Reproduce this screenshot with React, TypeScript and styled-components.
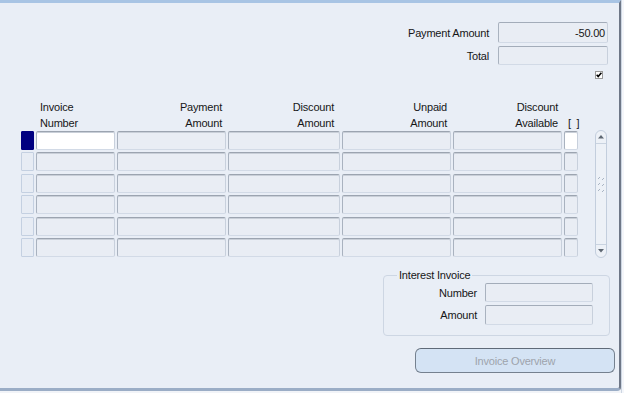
import React from "react";
import styled, { createGlobalStyle, css } from "styled-components";

const GlobalStyle = createGlobalStyle`
  html, body {
    margin: 0;
    padding: 0;
  }
  body {
    background: #f2f4f8;
    font-family: "Liberation Sans", Arial, sans-serif;
    font-size: 11px;
    letter-spacing: -0.2px;
    color: #161616;
    overflow: hidden;
  }
`;

const Page = styled.div`
  display: flex;
  width: 624px;
  height: 393px;
`;

const Window = styled.div`
  width: 621px;
  height: 391px;
  box-sizing: border-box;
  background: #e9eef6;
  border-top: 3px solid #a8c4e4;
  border-right: 2px solid #6e7787;
  border-bottom: 3px solid #9badc6;
  border-bottom-right-radius: 4px;
  display: flex;
  flex-direction: column;
`;

const OuterStrip = styled.div`
  flex: 1;
  background: #f4f6fa;
  border-left: 1px solid #cdd6e2;
`;

const Summary = styled.div`
  display: grid;
  grid-template-columns: auto 110px;
  column-gap: 9px;
  row-gap: 3px;
  align-items: center;
  justify-content: end;
  padding: 19px 11px 0 0;
`;

const Label = styled.div`
  text-align: right;
  white-space: nowrap;
`;

const fieldBevel = css`
  box-sizing: border-box;
  background: #e9edf4;
  border-top: 1px solid #a3acb9;
  border-left: 1px solid #a9b2bf;
  border-right: 1px solid #c8d0dc;
  border-bottom: 1px solid #d2dae6;
  border-radius: 2px;
`;

const Field = styled.div<{ $h?: number }>`
  ${fieldBevel};
  height: ${(p) => p.$h ?? 20}px;
  padding: 0 2px;
  display: flex;
  align-items: center;
  justify-content: flex-end;
`;

const CheckRow = styled.div`
  display: flex;
  justify-content: flex-end;
  padding-right: 16px;
  margin-top: 6px;
  height: 8px;
`;

const columns = css`
  display: grid;
  grid-template-columns: 13px 79px 109px 112px 109px 109px 14px;
  column-gap: 2px;
  padding-left: 21px;
`;

const HeaderGrid = styled.div`
  ${columns};
  margin-top: 20px;
  line-height: 16px;
`;

const HeadCell = styled.div<{ $align?: "left" | "right" | "center" }>`
  text-align: ${(p) => p.$align ?? "right"};
  padding: 0 4px;
  white-space: pre;
`;

const TableBody = styled.div`
  display: flex;
  align-items: flex-start;
`;

const RowsGrid = styled.div`
  ${columns};
  grid-auto-rows: 19px;
  row-gap: 2.4px;
`;

const Indicator = styled.div<{ $active?: boolean }>`
  box-sizing: border-box;
  border-radius: 1px;
  background: ${(p) => (p.$active ? "#000080" : "#e7ecf4")};
  border: 1px solid ${(p) => (p.$active ? "#000080" : "#c4d0e1")};
`;

const Cell = styled.div<{ $white?: boolean }>`
  ${fieldBevel};
  background: ${(p) => (p.$white ? "#ffffff" : "#e9edf4")};
  border-top-color: #9ca4b0;
  box-shadow: inset 0 1px 0 #c9cfd8;
`;

const ScrollTrack = styled.div`
  margin-left: 17px;
  margin-top: -1px;
  width: 12px;
  height: 128px;
  box-sizing: border-box;
  border: 1px solid #c3cedd;
  border-radius: 6px;
  background: #edf1f7;
  display: flex;
  flex-direction: column;
`;

const ScrollArrow = styled.div<{ $bottom?: boolean }>`
  height: 12px;
  display: flex;
  align-items: center;
  justify-content: center;
  ${(p) =>
    p.$bottom
      ? "border-top: 1px solid #c9d3e0;"
      : "border-bottom: 1px solid #c9d3e0;"}
`;

const ScrollMiddle = styled.div`
  flex: 1;
  display: flex;
  align-items: center;
  justify-content: center;
  padding-bottom: 16px;
`;

const BottomArea = styled.div`
  display: flex;
  flex-direction: column;
  align-items: flex-end;
`;

const Group = styled.fieldset`
  margin: 10px 9px 0 0;
  width: 227px;
  box-sizing: border-box;
  border: 1px solid #cdd6e3;
  border-radius: 4px;
  padding: 1px 16px 10px 0;
  display: grid;
  grid-template-columns: auto 108px;
  column-gap: 8px;
  row-gap: 3px;
  justify-content: end;
  align-items: center;
`;

const Legend = styled.legend`
  margin-left: 13px;
  padding: 0 2px;
  line-height: 14px;
`;

const OverviewButton = styled.button`
  margin: 12px 4px 0 0;
  width: 200px;
  height: 25px;
  box-sizing: border-box;
  background: #d4e3f4;
  border: 1px solid #75818f;
  border-top-color: #5f6a78;
  border-radius: 6px;
  color: #9ea4ac;
  font-family: "Liberation Sans", Arial, sans-serif;
  font-size: 11px;
  letter-spacing: -0.2px;
  cursor: default;
`;

const CheckMark = () => (
  <svg width="8" height="8" viewBox="0 0 8 8">
    <rect x="0.5" y="0.5" width="7" height="7" fill="#fff" stroke="#9a9a9a" />
    <path d="M1.7 3.8 L3.2 5.6 L6.4 1.8" stroke="#000" strokeWidth="1.6" fill="none" />
  </svg>
);

const Arrow = ({ down }: { down?: boolean }) => (
  <svg width="6" height="4" viewBox="0 0 6 4">
    <path d={down ? "M0 0 H6 L3 3.5 Z" : "M0 3.5 H6 L3 0 Z"} fill="#5e6772" />
  </svg>
);

const Grip = () => (
  <svg width="8" height="22" viewBox="0 0 8 22">
    {[0, 6, 12].map((y) => (
      <g key={y} stroke="#a9b4c3" strokeWidth="1">
        <path d={`M1 ${y + 4} L3 ${y + 2}`} />
        <path d={`M5 ${y + 5} L7 ${y + 3}`} />
      </g>
    ))}
  </svg>
);

const rows = [0, 1, 2, 3, 4, 5];

export default function App() {
  return (
    <>
      <GlobalStyle />
      <Page>
        <Window>
          <Summary>
            <Label>Payment Amount</Label>
            <Field $h={21}>-50.00</Field>
            <Label>Total</Label>
            <Field $h={19} />
          </Summary>
          <CheckRow>
            <CheckMark />
          </CheckRow>

          <HeaderGrid>
            <div />
            <HeadCell $align="left">
              Invoice
              <br />
              Number
            </HeadCell>
            <HeadCell>
              Payment
              <br />
              Amount
            </HeadCell>
            <HeadCell style={{ paddingRight: 6 }}>
              Discount
              <br />
              Amount
            </HeadCell>
            <HeadCell>
              Unpaid
              <br />
              Amount
            </HeadCell>
            <HeadCell>
              Discount
              <br />
              Available
            </HeadCell>
            <HeadCell $align="center">
              <br />
              {"[  ]"}
            </HeadCell>
          </HeaderGrid>

          <TableBody>
            <RowsGrid>
              {rows.map((r) => (
                <React.Fragment key={r}>
                  <Indicator $active={r === 0} />
                  <Cell $white={r === 0} />
                  <Cell />
                  <Cell />
                  <Cell />
                  <Cell />
                  <Cell $white={r === 0} />
                </React.Fragment>
              ))}
            </RowsGrid>
            <ScrollTrack>
              <ScrollArrow>
                <Arrow />
              </ScrollArrow>
              <ScrollMiddle>
                <Grip />
              </ScrollMiddle>
              <ScrollArrow $bottom>
                <Arrow down />
              </ScrollArrow>
            </ScrollTrack>
          </TableBody>

          <BottomArea>
            <Group>
              <Legend>Interest Invoice</Legend>
              <Label>Number</Label>
              <Field $h={19} />
              <Label>Amount</Label>
              <Field $h={20} />
            </Group>
            <OverviewButton>Invoice Overview</OverviewButton>
          </BottomArea>
        </Window>
        <OuterStrip />
      </Page>
    </>
  );
}
